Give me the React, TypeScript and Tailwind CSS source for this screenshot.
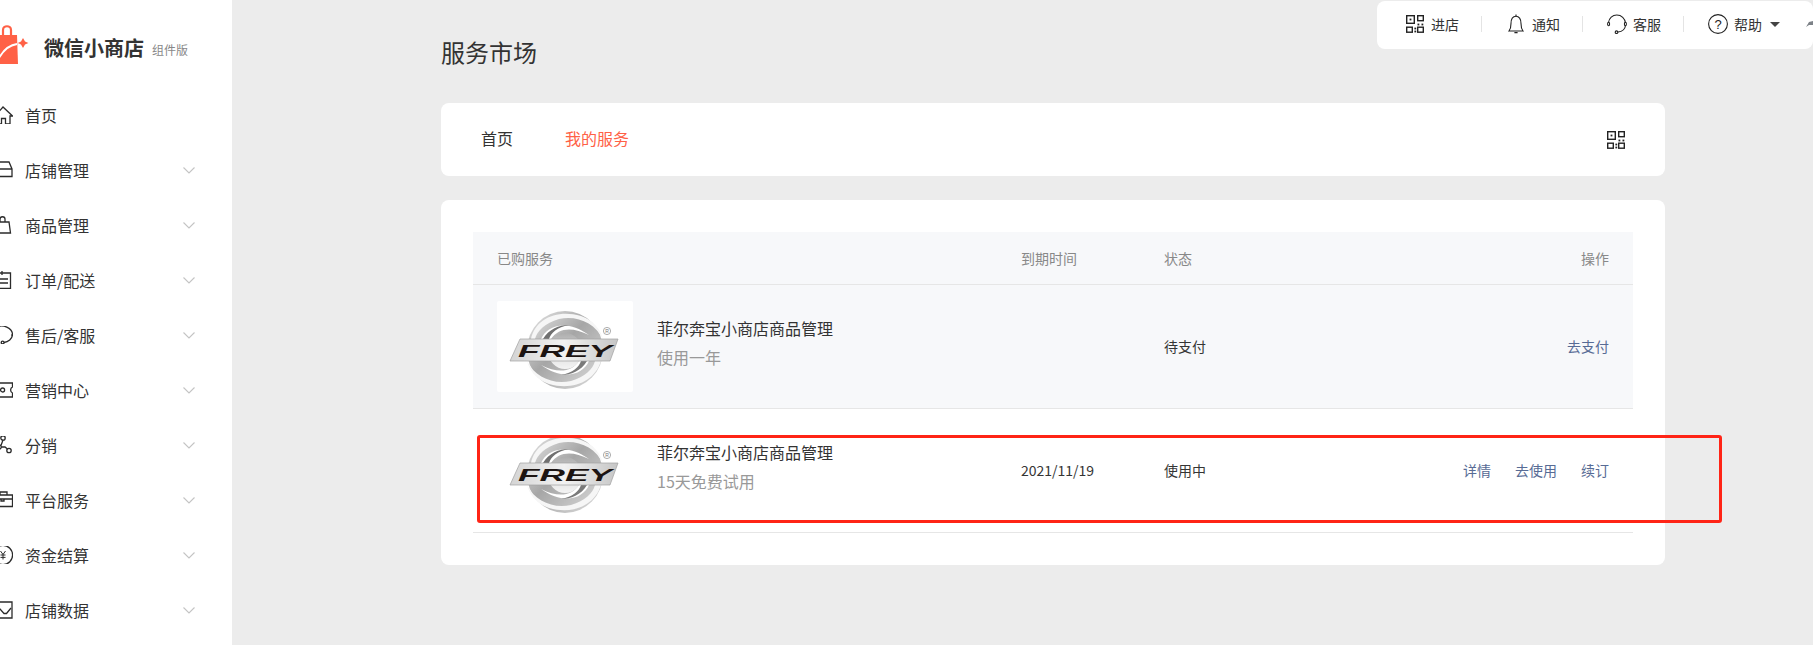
import type { ReactNode } from "react"

function FreyLogo({ id }: { id: string }) {
  return (
    <svg viewBox="0 0 136 91" className="w-[136px] h-[91px] block">
      <defs>
        <linearGradient id={`${id}-ring`} x1="0" y1="0" x2="1" y2="1">
          <stop offset="0" stopColor="#e8e8e8" />
          <stop offset="0.45" stopColor="#a6a6a6" />
          <stop offset="1" stopColor="#dedede" />
        </linearGradient>
        <linearGradient id={`${id}-core`} x1="0" y1="0" x2="0" y2="1">
          <stop offset="0" stopColor="#adadad" />
          <stop offset="0.6" stopColor="#e0e0e0" />
          <stop offset="1" stopColor="#f4f4f4" />
        </linearGradient>
        <linearGradient id={`${id}-band`} x1="0" y1="0" x2="1" y2="0">
          <stop offset="0" stopColor="#d4d4d4" />
          <stop offset="0.5" stopColor="#f2f2f2" />
          <stop offset="1" stopColor="#c6c6c6" />
        </linearGradient>
        <filter id={`${id}-soft`}>
          <feGaussianBlur stdDeviation="0.4" />
        </filter>
      </defs>
      <g filter={`url(#${id}-soft)`}>
        <ellipse cx="68" cy="49" rx="38" ry="39" fill={`url(#${id}-ring)`} />
        <path d="M34 38 C38 18 60 8 84 15 C98 20 104 30 106 38 C98 22 80 14 62 18 C48 22 40 30 38 38 Z" fill="#f6f6f6" />
        <path d="M44 38 C50 24 70 18 92 34 C76 26 62 26 54 38 Z" fill="#ffffff" />
        <path d="M46 38 C52 28 62 24 72 24 C60 26 54 32 52 38 Z" fill="#6f6f6f" />
        <path d="M104 60 C98 80 76 90 52 83 C38 78 32 68 30 60 C38 76 56 84 74 80 C88 76 96 68 98 60 Z" fill="#f6f6f6" />
        <path d="M92 60 C86 74 66 80 44 64 C60 72 74 72 82 60 Z" fill="#ffffff" />
        <path d="M90 60 C84 70 74 74 64 74 C76 72 82 66 84 60 Z" fill="#7a7a7a" />
        <ellipse cx="68" cy="50" rx="17" ry="18" fill={`url(#${id}-core)`} />
        <path d="M23 38 H121 L113 60 H13 Z" fill={`url(#${id}-band)`} stroke="#a0a0a0" strokeWidth="0.7" />
      </g>
      <text
        x="21"
        y="56"
        textLength="94"
        lengthAdjust="spacingAndGlyphs"
        fontFamily="'Liberation Sans', sans-serif"
        fontWeight="700"
        fontStyle="italic"
        fontSize="17"
        fill="#1c1412"
      >
        FREY
      </text>
      <circle cx="110" cy="30" r="3.6" fill="none" stroke="#8a8a8a" strokeWidth="0.7" />
      <text x="108.2" y="32" fontFamily="'Liberation Sans', sans-serif" fontSize="5" fill="#777777">
        R
      </text>
    </svg>
  )
}

function QrIcon() {
  return (
    <svg viewBox="0 0 18 18" className="w-[18px] h-[18px] shrink-0" fill="none" stroke="#222222" strokeWidth="1.4">
      <rect x="0.7" y="0.7" width="7.6" height="7.6" />
      <rect x="3.6" y="3.6" width="1.8" height="1.8" fill="#222222" stroke="none" />
      <rect x="11.7" y="0.7" width="5.6" height="5" />
      <rect x="0.7" y="12.2" width="5.6" height="5" />
      <rect x="11.7" y="12.2" width="5.6" height="5" />
      <rect x="8.4" y="12.6" width="1.8" height="1.8" fill="#222222" stroke="none" />
      <rect x="8.4" y="15.6" width="1.8" height="1.8" fill="#222222" stroke="none" />
      <rect x="11.5" y="8.6" width="1.8" height="1.8" fill="#222222" stroke="none" />
      <rect x="15.5" y="8.6" width="1.8" height="1.8" fill="#222222" stroke="none" />
    </svg>
  )
}

function BellIcon() {
  return (
    <svg viewBox="0 0 16 20" className="w-[16px] h-[20px] shrink-0" fill="none" stroke="#222222" strokeWidth="1.1">
      <path d="M1 17 C2.6 15 3 13 3 9.5 C3 5 5 2.2 8 2.2 C11 2.2 13 5 13 9.5 C13 13 13.4 15 15 17 Z" />
      <path d="M8 0.6 V2.2 M6.4 18.6 H9.6" />
    </svg>
  )
}

function HeadsetIcon() {
  return (
    <svg viewBox="0 0 20 20" className="w-[20px] h-[20px] shrink-0" fill="none" stroke="#222222" strokeWidth="1.1">
      <path d="M1.5 8.5 C2 4 5.5 1 9.8 1 C14.5 1 18 4.5 18.5 9" />
      <path d="M18.5 11.5 C18 15.5 15.5 17.5 11 18" />
      <ellipse cx="1.6" cy="10" rx="1" ry="1.8" />
      <ellipse cx="18.4" cy="10" rx="1" ry="1.8" />
      <circle cx="9.5" cy="18.2" r="1.3" />
    </svg>
  )
}

function HelpIcon() {
  return (
    <svg viewBox="0 0 20 20" className="w-[20px] h-[20px] shrink-0">
      <circle cx="10" cy="10" r="9.4" fill="none" stroke="#222222" strokeWidth="1.1" />
      <text x="10" y="14.6" textAnchor="middle" fontFamily="'Liberation Sans', sans-serif" fontSize="13" fill="#222222">
        ?
      </text>
    </svg>
  )
}

function Divider() {
  return <div className="w-px h-[16px] bg-[#e4e4e4] ml-[22px]" />
}

function TopBar() {
  return (
    <div className="absolute top-px right-0 w-[436px] h-[48px] bg-white rounded-[8px] flex items-center pl-[29px] pb-[2px] text-[14px] text-[#333333] overflow-hidden">
      <QrIcon />
      <span className="ml-[7px]">进店</span>
      <Divider />
      <div className="ml-[26px]">
        <BellIcon />
      </div>
      <span className="ml-[8px]">通知</span>
      <Divider />
      <div className="ml-[24px]">
        <HeadsetIcon />
      </div>
      <span className="ml-[6px]">客服</span>
      <Divider />
      <div className="ml-[24px]">
        <HelpIcon />
      </div>
      <span className="ml-[6px]">帮助</span>
      <div className="ml-[8px] w-0 h-0 border-x-[5px] border-x-transparent border-t-[5px] border-t-[#444444]" />
      <svg viewBox="0 0 7 7" className="ml-[26px] w-[7px] h-[7px] shrink-0">
        <path d="M0 6 L3 1 L7 0 V4 L3 4 Z" fill="#7d8288" />
      </svg>
    </div>
  )
}

// x is the page x, y is relative to the row centre, so the clipped left part falls off the page
function NavIcon({ children }: { children: ReactNode }) {
  return (
    <svg
      viewBox="-5 -9 18 18"
      className="w-[18px] h-[18px] -ml-[5px] mr-[12px] shrink-0"
      fill="none"
      stroke="#2b2b2b"
      strokeWidth="1.3"
    >
      {children}
    </svg>
  )
}

const navItems: { label: string; icon: ReactNode }[] = [
  {
    label: "首页",
    icon: <path d="M-5 1 L3 -8 L12.5 1 H10 V9 H5.5 V3.5 H1.5 V9 H-3" />,
  },
  {
    label: "店铺管理",
    icon: <path d="M-3 -8 H9 L12 -1 V6.5 H-4 V-1 Z M-4 -1 H12" />,
  },
  {
    label: "商品管理",
    icon: <path d="M-5 -3 H9 L10.5 8 H-5 M0 -3 V-6 C0 -9 5 -9 5 -6 V-3" />,
  },
  {
    label: "订单/配送",
    icon: <path d="M-5 -7 H10.5 V8.5 H-5 M2 -9 V-5 M-3 -1 H8 M-3 3 H8" />,
  },
  {
    label: "售后/客服",
    icon: (
      <>
        <path d="M-3 -8 C3 -11 12 -7 12.5 -1 C12.5 4 8 7 4 7.5" />
        <circle cx="2.6" cy="7.6" r="1.4" />
        <path d="M12.5 -1 V1" strokeWidth="2" />
      </>
    ),
  },
  {
    label: "营销中心",
    icon: (
      <>
        <path d="M-5 -7 H12.5 V-3 C10 -2 10 2 12.5 3 V7 H-5" />
        <circle cx="2.6" cy="0" r="2" />
      </>
    ),
  },
  {
    label: "分销",
    icon: (
      <>
        <circle cx="3" cy="-7" r="2.2" />
        <circle cx="9" cy="5.5" r="2.2" />
        <circle cx="-1" cy="2" r="2.2" />
        <path d="M3 -5 L1 0.5 M1 2 H5 L7.5 4" />
      </>
    ),
  },
  {
    label: "平台服务",
    icon: <path d="M-5 -5 H12.5 V6.5 H-5 M-5 -1 H12.5 M0 -5 V-8 H7 V-5 M1 -1 V1 H4 V-1" />,
  },
  {
    label: "资金结算",
    icon: (
      <>
        <circle cx="3" cy="0" r="9.6" />
        <path d="M0.5 -4 L3 -0.5 L5.5 -4 M3 -0.5 V4.5 M0.5 0 H5.5 M0.5 2.4 H5.5" strokeWidth="1" />
      </>
    ),
  },
  {
    label: "店铺数据",
    icon: (
      <>
        <path d="M-5 -8 H12 V8 H-5" />
        <path d="M-5 -5 L0 -1 L4 3.5 L6.5 3.5 L11 -2" />
      </>
    ),
  },
]

function Sidebar() {
  return (
    <aside className="w-[232px] shrink-0 bg-white overflow-hidden h-[645px]">
      <div className="h-[87px] flex items-start">
        <svg viewBox="0 0 30 42" className="w-[30px] h-[42px] shrink-0 mt-[25px]">
          <path d="M-1 10 H17 L18 39 H-1 Z" fill="#ff6146" />
          <path d="M3 13 V5 C3 0 11 0 11 5 V13" fill="none" stroke="#ff6146" strokeWidth="2.2" />
          <path d="M-1 33 C4 24 10 20 17 19" fill="none" stroke="#ffffff" strokeWidth="1.8" />
          <path d="M23 13 L25 16.5 L28.4 18 L25 19.6 L23 23 L21 19.6 L17.8 18 L21 16.5 Z" fill="#ff6146" />
        </svg>
        <span className="ml-[14px] mt-[38px] text-[20px] font-bold text-[#333333] leading-none">微信小商店</span>
        <span className="ml-[8px] mt-[44px] text-[12px] text-[#888888] leading-none">组件版</span>
      </div>
      {navItems.map((item, i) => (
        <div key={item.label} className="h-[55px] flex items-center text-[16px] text-[#333333]">
          <NavIcon>{item.icon}</NavIcon>
          <span className="flex-1">{item.label}</span>
          {i > 0 && (
            <svg viewBox="0 0 12 7" className="w-[12px] h-[7px] mr-[37px] mt-[2px]" fill="none" stroke="#c4c4c4" strokeWidth="1.1">
              <path d="M0.5 0.5 L6 6 L11.5 0.5" />
            </svg>
          )}
        </div>
      ))}
    </aside>
  )
}

const rowGrid = "grid grid-cols-[524px_143px_1fr_auto] items-center px-6"

function ServiceRow({
  id,
  sub,
  date,
  status,
  links,
  className,
}: {
  id: string
  sub: string
  date?: string
  status: string
  links: string[]
  className: string
}) {
  return (
    <div className={`${rowGrid} h-[124px] border-b border-[#e6e6e6] ${className}`}>
      <div className="flex items-center">
        <div className="bg-white rounded-[2px]">
          <FreyLogo id={id} />
        </div>
        <div className="ml-[24px] -mt-[8px]">
          <div className="text-[16px] leading-[24px] text-[#333333]">菲尔奔宝小商店商品管理</div>
          <div className="text-[16px] leading-[24px] mt-[5px] text-[#999999]">{sub}</div>
        </div>
      </div>
      <div className="text-[14px] text-[#353535]">{date}</div>
      <div className="text-[14px] text-[#353535]">{status}</div>
      <div className="flex gap-[24px] text-[14px] text-[#576b95]">
        {links.map((link) => (
          <span key={link}>{link}</span>
        ))}
      </div>
    </div>
  )
}

export default function App() {
  return (
    <div className="relative flex h-[645px] w-[1813px] overflow-hidden bg-[#ececec] font-['Noto_Sans_CJK_SC','Liberation_Sans',sans-serif]">
      <Sidebar />
      <main className="w-[1224px] ml-[209px]">
        <h1 className="h-[103px] pt-[34px] text-[24px] leading-[36px] font-normal text-[#333333]">服务市场</h1>
        <div className="h-[73px] bg-white rounded-[8px] flex items-center pl-[40px] pr-[40px] text-[16px]">
          <span className="-mt-[3px] text-[#333333]">首页</span>
          <span className="-mt-[3px] ml-[52px] text-[#ff6146]">我的服务</span>
          <div className="ml-auto">
            <QrIcon />
          </div>
        </div>
        <div className="mt-[24px] h-[365px] bg-white rounded-[8px] pt-[32px] px-[32px]">
          <div className={`${rowGrid} h-[53px] bg-[#f7f8fa] border-b border-[#e6e6e6] text-[14px] text-[#888888]`}>
            <div>已购服务</div>
            <div>到期时间</div>
            <div>状态</div>
            <div>操作</div>
          </div>
          <ServiceRow id="a" sub="使用一年" status="待支付" links={["去支付"]} className="bg-[#f7f8fa]" />
          <ServiceRow id="b" sub="15天免费试用" date="2021/11/19" status="使用中" links={["详情", "去使用", "续订"]} className="bg-white" />
        </div>
      </main>
      <TopBar />
      <div className="absolute left-[477px] top-[435px] w-[1245px] h-[88px] border-[3px] border-[#ff2416] rounded-[3px]" />
    </div>
  )
}
